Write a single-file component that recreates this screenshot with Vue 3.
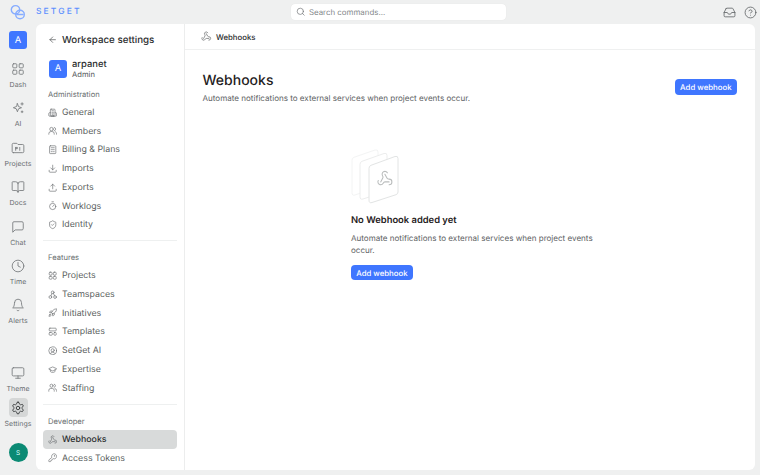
<script setup>
const I = {
  dash: '<rect x="3" y="3" width="7" height="7" rx="1.5"/><rect x="14" y="3" width="7" height="7" rx="1.5"/><rect x="3" y="14" width="7" height="7" rx="1.5"/><rect x="14" y="14" width="7" height="7" rx="1.5"/>',
  ai: '<path d="M11 4.500l1.900 5.100 5.100 1.900-5.100 1.900L11 18.500l-1.900-5.100L4 11.500l5.100-1.900z"/><path d="M19 3v4M17 5h4M19 17v3M17.500 18.500h3"/>',
  folder: '<path d="M4 20h16a2 2 0 0 0 2-2V8a2 2 0 0 0-2-2h-8L10 4H4a2 2 0 0 0-2 2v12a2 2 0 0 0 2 2z"/><path d="M8 11v5M8 11h3v2H8M15 16v-5"/>',
  book: '<path d="M12 7v14"/><path d="M3 18a1 1 0 0 1-1-1V4a1 1 0 0 1 1-1h5a4 4 0 0 1 4 4 4 4 0 0 1 4-4h5a1 1 0 0 1 1 1v13a1 1 0 0 1-1 1h-6a3 3 0 0 0-3 3 3 3 0 0 0-3-3z"/>',
  chat: '<path d="M21 15a2 2 0 0 1-2 2H7l-4 4V5a2 2 0 0 1 2-2h14a2 2 0 0 1 2 2z"/>',
  clock: '<circle cx="12" cy="12" r="10"/><path d="M12 6v6l4 2"/>',
  bell: '<path d="M6 8a6 6 0 0 1 12 0c0 7 3 9 3 9H3s3-2 3-9"/><path d="M10.300 21a1.940 1.940 0 0 0 3.400 0"/>',
  monitor: '<rect x="2" y="3" width="20" height="14" rx="2"/><path d="M8 21h8M12 17v4"/>',
  gear: '<path d="M12.200 2h-.4a2 2 0 0 0-2 2v.2a2 2 0 0 1-1 1.700l-.4.3a2 2 0 0 1-2 0l-.2-.1a2 2 0 0 0-2.700.7l-.2.4a2 2 0 0 0 .7 2.700l.2.1a2 2 0 0 1 1 1.700v.5a2 2 0 0 1-1 1.800l-.2.1a2 2 0 0 0-.7 2.700l.2.4a2 2 0 0 0 2.700.7l.2-.1a2 2 0 0 1 2 0l.4.3a2 2 0 0 1 1 1.700v.2a2 2 0 0 0 2 2h.4a2 2 0 0 0 2-2v-.2a2 2 0 0 1 1-1.700l.4-.3a2 2 0 0 1 2 0l.2.1a2 2 0 0 0 2.700-.7l.2-.4a2 2 0 0 0-.7-2.700l-.2-.1a2 2 0 0 1-1-1.800v-.5a2 2 0 0 1 1-1.700l.2-.1a2 2 0 0 0 .7-2.700l-.2-.4a2 2 0 0 0-2.700-.7l-.2.1a2 2 0 0 1-2 0l-.4-.3a2 2 0 0 1-1-1.700V4a2 2 0 0 0-2-2z"/><circle cx="12" cy="12" r="3"/>',
  building: '<rect x="6" y="3" width="12" height="18" rx="2"/><path d="M6 12H4a2 2 0 0 0-2 2v5a2 2 0 0 0 2 2h16a2 2 0 0 0 2-2v-5a2 2 0 0 0-2-2h-2M10 7h4M10 11h4M10 15h4M10 21v-3h4v3"/>',
  members: '<circle cx="9" cy="8" r="4.500"/><path d="M2 21v-1a6 6 0 0 1 6-6h2a6 6 0 0 1 6 6v1"/><path d="M16 3.600a4.500 4.500 0 0 1 0 8.800M19 14.500a6 6 0 0 1 3 5.500v1"/>',
  bill: '<rect x="4" y="2" width="16" height="20" rx="2"/><path d="M8 7h8M8 12h8M8 17h3M14 17h2"/>',
  imp: '<path d="M12 3v12M7 10l5 5 5-5"/><path d="M3 16v3a2 2 0 0 0 2 2h14a2 2 0 0 0 2-2v-3"/>',
  exp: '<path d="M12 15V3M7 8l5-5 5 5"/><path d="M3 16v3a2 2 0 0 0 2 2h14a2 2 0 0 0 2-2v-3"/>',
  timer: '<path d="M10 2h4M12 14l3-3"/><circle cx="12" cy="14" r="8"/>',
  shield: '<path d="M20 13c0 5-3.500 7.500-7.700 9a1 1 0 0 1-.6 0C7.500 20.500 4 18 4 13V6a1 1 0 0 1 1-1c2 0 4.500-1.200 6.200-2.700a1.200 1.200 0 0 1 1.600 0C14.500 3.800 17 5 19 5a1 1 0 0 1 1 1z"/><path d="M9 12l2 2 4-4"/>',
  grid: '<rect x="3" y="3" width="7.500" height="7.500" rx="2.500"/><rect x="13.500" y="3" width="7.500" height="7.500" rx="2.500"/><rect x="3" y="13.500" width="7.500" height="7.500" rx="2.500"/><rect x="13.500" y="13.500" width="7.500" height="7.500" rx="2.500"/>',
  team: '<circle cx="12" cy="6" r="3.500"/><circle cx="6" cy="18" r="3.500"/><circle cx="18" cy="18" r="3.500"/><path d="M10 9l-2.500 5.500M14 9l2.500 5.500"/>',
  rocket: '<path d="M4.500 16.500c-1.500 1.300-2 5-2 5s3.700-.5 5-2c.7-.8.7-2.100-.1-2.900a2.200 2.200 0 0 0-2.900-.1z"/><path d="M12 15l-3-3a22 22 0 0 1 2-3.900A12.900 12.900 0 0 1 22 2c0 2.700-.8 7.500-6 11a22 22 0 0 1-4 2z"/><path d="M9 12H4s.6-3 2-4c1.600-1.100 5 0 5 0M12 15v5s3-.6 4-2c1.100-1.600 0-5 0-5"/>',
  tmpl: '<rect x="3" y="3" width="18" height="7" rx="2"/><rect x="3" y="14" width="8" height="7" rx="2"/><rect x="15" y="14" width="6" height="7" rx="2"/>',
  aic: '<circle cx="12" cy="12" r="10"/><circle cx="12" cy="11" r="4"/><path d="M6.500 19a6 6 0 0 1 11 0"/>',
  cap: '<path d="M21.400 10.900a1 1 0 0 0 0-1.800L12.800 5.200a2 2 0 0 0-1.600 0L2.600 9.100a1 1 0 0 0 0 1.800l8.600 3.900a2 2 0 0 0 1.600 0z"/><path d="M6 12.500V16c0 1.600 3 3 6 3s6-1.400 6-3v-3.500"/>',
  users: '<circle cx="9" cy="7" r="4"/><path d="M2 21v-2a5 5 0 0 1 5-5h4a5 5 0 0 1 5 5v2"/><path d="M16 3.100a4 4 0 0 1 0 7.800M22 21v-2a5 5 0 0 0-4-4.800"/>',
  hook: '<path d="M18 16.980h-5.990c-1.100 0-1.950.94-2.480 1.900A4 4 0 0 1 2 17c.01-.7.2-1.400.57-2"/><path d="M6 17l3.130-5.780c.53-.97.1-2.180-.5-3.100a4 4 0 1 1 6.890-4.060"/><path d="M12 6l3.130 5.730C15.660 12.700 16.900 13 18 13a4 4 0 0 1 0 8"/>',
  key: '<path d="M2.586 17.414A2 2 0 0 0 2 18.828V21a1 1 0 0 0 1 1h3a1 1 0 0 0 1-1v-1a1 1 0 0 1 1-1h1a1 1 0 0 0 1-1v-1a1 1 0 0 1 1-1h.172a2 2 0 0 0 1.414-.586l.814-.814a6.500 6.500 0 1 0-4-4z"/><circle cx="16.500" cy="7.500" r=".5"/>',
  search: '<circle cx="11" cy="11" r="8"/><path d="M21 21l-4.300-4.300"/>',
  inbox: '<path d="M22 12h-6l-2 3h-4l-2-3H2"/><path d="M5.500 5.100L2 12v6a2 2 0 0 0 2 2h16a2 2 0 0 0 2-2v-6l-3.500-6.900A2 2 0 0 0 16.800 4H7.200a2 2 0 0 0-1.700 1.100z"/>',
  help: '<circle cx="12" cy="12" r="10"/><path d="M9.100 9a3 3 0 0 1 5.800 1c0 2-3 3-3 3M12 17h.01"/>',
  back: '<path d="M19 12H5M12 19l-7-7 7-7"/>'
}
const railTop = [
  { n: 'Dash', i: 'dash' }, { n: 'AI', i: 'ai' }, { n: 'Projects', i: 'folder' }, { n: 'Docs', i: 'book' },
  { n: 'Chat', i: 'chat' }, { n: 'Time', i: 'clock' }, { n: 'Alerts', i: 'bell' }
]
const groups = [
  { t: 'Administration', items: [['General', 'building'], ['Members', 'members'], ['Billing & Plans', 'bill'], ['Imports', 'imp'], ['Exports', 'exp'], ['Worklogs', 'timer'], ['Identity', 'shield']] },
  { t: 'Features', items: [['Projects', 'grid'], ['Teamspaces', 'team'], ['Initiatives', 'rocket'], ['Templates', 'tmpl'], ['SetGet AI', 'aic'], ['Expertise', 'cap'], ['Staffing', 'users']] },
  { t: 'Developer', items: [['Webhooks', 'hook'], ['Access Tokens', 'key']] }
]
</script>

<template>
  <div class="app">
    <header class="top">
      <div class="brand">
        <svg class="logo" viewBox="0 0 16 16">
          <circle cx="5.500" cy="5.800" r="4.200" />
          <circle cx="10" cy="10.500" r="4.300" />
          <path d="M7 10.500h6" />
        </svg>
        <span class="word">SETGET</span>
      </div>
      <div class="search">
        <svg class="ic" viewBox="0 0 24 24" v-html="I.search"></svg>
        <span>Search commands...</span>
      </div>
      <div class="tools">
        <svg class="tool" viewBox="0 0 24 24" v-html="I.inbox"></svg>
        <svg class="tool" viewBox="0 0 24 24" v-html="I.help"></svg>
      </div>
    </header>
    <div class="body">
      <nav class="rail">
        <div class="ws">A</div>
        <div class="rail-list">
          <div v-for="r in railTop" :key="r.n" class="rail-item">
            <svg class="rail-ic" viewBox="0 0 24 24" v-html="I[r.i]"></svg>
            <span>{{ r.n }}</span>
          </div>
        </div>
        <div class="rail-bottom">
          <div class="rail-item theme">
            <svg class="rail-ic" viewBox="0 0 24 24" v-html="I.monitor"></svg>
            <span>Theme</span>
          </div>
          <div class="rail-item settings">
            <div class="active-ic"><svg class="rail-ic dark" viewBox="0 0 24 24" v-html="I.gear"></svg></div>
            <span>Settings</span>
          </div>
          <div class="user">S</div>
        </div>
      </nav>
      <div class="card">
        <aside class="side">
          <div class="side-head">
            <svg class="back" viewBox="0 0 24 24" v-html="I.back"></svg>
            <span>Workspace settings</span>
          </div>
          <div class="who">
            <div class="who-logo">A</div>
            <div class="who-text">
              <strong>arpanet</strong>
              <small>Admin</small>
            </div>
          </div>
          <section v-for="(g, gi) in groups" :key="g.t" class="group" :class="{ ruled: gi < 2 }">
            <h4>{{ g.t }}</h4>
            <div v-for="it in g.items" :key="it[0]" class="row" :class="{ on: it[0] === 'Webhooks' }">
              <svg class="ic" viewBox="0 0 24 24" v-html="I[it[1]]"></svg>
              <span>{{ it[0] }}</span>
            </div>
          </section>
        </aside>
        <main class="main">
          <div class="crumb">
            <svg class="ic crumb-ic" viewBox="0 0 24 24" v-html="I.hook"></svg>
            <span>Webhooks</span>
          </div>
          <div class="content">
            <div class="title-row">
              <div>
                <h1>Webhooks</h1>
                <p>Automate notifications to external services when project events occur.</p>
              </div>
              <button class="btn">Add webhook</button>
            </div>
            <div class="empty">
              <svg class="stack" viewBox="0 0 50 55">
                <path class="p1" d="M1 11Q1 9 3 8.300L24 1Q27 0 27 3V36Q27 38 25 38.700L4 46Q1 47 1 44Z" />
                <path class="p2" d="M9 15Q9 13 11 12.300L33 4.500Q36 3.500 36 6.500V40Q36 42 34 42.700L12 50Q9 51 9 48Z" />
                <path class="p3" d="M18 19Q18 17 20 16.300L44 7.500Q47 6.500 47 9.500V43Q47 45 45 45.700L21 53.500Q18 54.500 18 51.500Z" />
                <g class="stack-hook" transform="translate(25.500 21) scale(.7)" v-html="I.hook"></g>
              </svg>
              <h2>No Webhook added yet</h2>
              <p>Automate notifications to external services when project events occur.</p>
              <button class="btn">Add webhook</button>
            </div>
          </div>
        </main>
      </div>
    </div>
  </div>
</template>

<style>
html, body { margin: 0; }
</style>

<style scoped>
.app {
  width: 760px; height: 475px; overflow: hidden; display: flex; flex-direction: column;
  background: #eff0f0; font-family: Inter, "Liberation Sans", sans-serif; color: #3f4243;
  text-rendering: geometricPrecision;
}
svg { fill: none; stroke: currentColor; stroke-width: 1.700; stroke-linecap: round; stroke-linejoin: round; flex: none; display: block; }
.top { height: 24px; flex: none; display: flex; align-items: center; }
.brand { display: flex; align-items: center; margin-left: 10px; width: 281px; }
.logo { width: 16px; height: 16px; color: #86acff; stroke-width: 1.400; }
.word { margin-left: 10px; font-size: 8.500px; font-weight: 500; letter-spacing: 2.100px; color: #5d8fff; }
.search {
  width: 215px; height: 16px; box-sizing: border-box; background: #fff; border-radius: 4px; display: flex;
  align-items: center; gap: 4px; padding-left: 4.500px; font-size: 7.900px; color: #84888a; box-shadow: 0 0 1px rgba(0,0,0,.1);
}
.ic { width: 9.400px; height: 9.400px; color: #6d7072; }
.tools { margin-left: auto; margin-right: 3px; display: flex; gap: 8px; align-items: center; }
.tool { width: 13px; height: 13px; color: #5f6365; stroke-width: 1.500; }
.body { flex: 1; display: flex; min-height: 0; padding-bottom: 5px; }
.rail { width: 36px; flex: none; display: flex; flex-direction: column; align-items: center; }
.ws {
  width: 18px; height: 18px; margin-top: 7px; border-radius: 3px; background: #3f76ff; color: #fff;
  font-size: 9.400px; display: flex; align-items: center; justify-content: center;
}
.rail-list { display: flex; flex-direction: column; margin-top: 12px; gap: 8.400px; }
.rail-item { width: 36px; display: flex; flex-direction: column; align-items: center; font-size: 7px; line-height: 9px; color: #6a6e70; gap: 4px; height: 31px; }
.rail-ic { width: 14px; height: 14px; color: #797d7f; margin-top: 1px; stroke-width: 1.500; }
.rail-ic.dark { color: #2f3233; margin: 0; }
.rail-bottom { margin-top: auto; display: flex; flex-direction: column; align-items: center; }
.theme { height: 36px; }
.active-ic { width: 19px; height: 19px; border-radius: 4px; background: #d5d7d7; display: flex; align-items: center; justify-content: center; margin-top: -3px; }
.settings { gap: 1.500px; height: 35px; }
.user {
  width: 19px; height: 19px; border-radius: 50%; background: #0b8a74; color: #dff; font-size: 6.500px;
  display: flex; align-items: center; justify-content: center; margin: 7px 0 8px;
}
.card { flex: 1; margin-right: 5px; background: #fff; border-radius: 6px; display: flex; overflow: hidden; min-width: 0; }
.side { width: 149px; flex: none; box-sizing: border-box; border-right: 1px solid #eceded; padding: 0 7px; overflow: hidden; }
.side-head { display: flex; align-items: center; height: 15px; margin-top: 8.500px; padding-left: 5px; gap: 4.600px; font-size: 9.750px; font-weight: 500; color: #2c2e2f; }
.back { width: 9.400px; height: 9.400px; color: #4a4d4f; }
.who { display: flex; align-items: center; gap: 5px; margin-top: 10.500px; padding-left: 6px; }
.who-logo { width: 18px; height: 18px; border-radius: 3px; background: #3f76ff; color: #fff; font-size: 9.400px; display: flex; align-items: center; justify-content: center; }
.who-text { display: flex; flex-direction: column; line-height: 10px; padding-top: 2px; }
.who-text strong { font-weight: 500; font-size: 9.400px; color: #2c2e2f; }
.who-text small { font-size: 7.600px; line-height: 9.500px; color: #55585a; }
.group { margin-top: 7.500px; }
.group.ruled { border-bottom: 1px solid #eef0f0; padding-bottom: 6px; }
.group + .group { margin-top: 9px; }
.group + .group + .group { margin-top: 9.500px; }
h4 { margin: 0; padding-left: 5px; height: 16px; line-height: 16px; font-size: 7.600px; font-weight: 400; color: #6b6f71; }
.row { height: 18.750px; display: flex; align-items: center; gap: 4.600px; padding-left: 5px; border-radius: 4px; font-size: 8.800px; color: #5c5f61; }
.row.on { background: #d8dada; color: #2c2e2f; font-weight: 500; }
.main { flex: 1; min-width: 0; }
.crumb { height: 26px; box-sizing: border-box; border-bottom: 1px solid #eff0f0; display: flex; align-items: center; gap: 4.500px; padding-left: 16px; font-size: 7.800px; font-weight: 500; color: #2c2e2f; }
.crumb-ic { width: 10.500px; height: 10.500px; }
.content { padding: 21px 18px 0 17.500px; }
.title-row { display: flex; justify-content: space-between; align-items: flex-start; }
h1 { margin: 0; font-size: 14px; line-height: 20px; font-weight: 500; color: #1f2122; }
.title-row p { margin: 1px 0 0; font-size: 8.050px; line-height: 13px; color: #5d6163; }
.btn {
  font-family: inherit; border: 0; background: #3f76ff; color: #fff; border-radius: 4px; font-size: 7.800px; font-weight: 500;
  height: 16px; padding: 0 5.500px; margin-top: 8px; line-height: 16px; display: block; text-rendering: geometricPrecision;
}
.empty { margin: 44px 0 0 148.500px; width: 245px; }
.stack { width: 50px; height: 55px; overflow: visible; stroke-width: 1; }
.p1, .p2, .p3 { fill: #fff; }
.p1 { stroke: #f3f4f4; }
.p2 { stroke: #eceded; }
.p3 { stroke: #e2e4e4; }
.stack-hook { stroke: #b9bcbc; stroke-width: 1.500; }
h2 { margin: 9.500px 0 0; font-size: 9.400px; line-height: 14px; font-weight: 600; color: #1f2122; }
.empty p { margin: 4px 0 0; font-size: 8.050px; line-height: 12px; color: #5d6163; }
.empty .btn { margin-top: 9px; height: 15px; padding: 0 5.200px; }
</style>
